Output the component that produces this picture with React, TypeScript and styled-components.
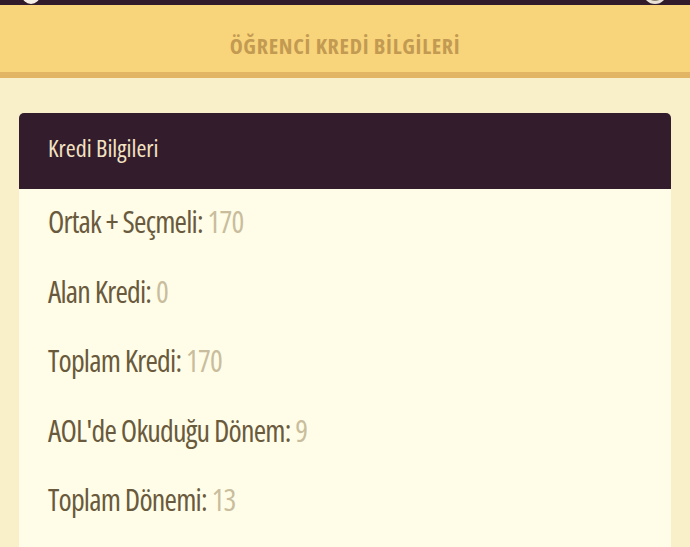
import React from "react";
import styled, { createGlobalStyle } from "styled-components";

const Global = createGlobalStyle`
  html, body { margin: 0; padding: 0; }
  body {
    background: #f9efc9;
    font-family: "Open Sans", "Noto Sans", sans-serif;
    font-stretch: condensed;
  }
`;

const Page = styled.div`
  min-height: 547px;
  overflow: hidden;
  background: #f9efc9;
`;

const TopBar = styled.div`
  position: relative;
  height: 5px;
  background: #321b2b;
  overflow: hidden;
`;

const TopIcon = styled.span<{ $left: number; $size: number; $ring?: boolean }>`
  position: absolute;
  left: ${(p) => p.$left}px;
  bottom: 1px;
  width: ${(p) => p.$size}px;
  height: ${(p) => p.$size}px;
  border-radius: 50%;
  box-sizing: border-box;
  background: ${(p) => (p.$ring ? "#8d7f72" : "#f4efe6")};
  border: ${(p) => (p.$ring ? "3px solid #e9e2d6" : "none")};
`;

const TitleBar = styled.header`
  background: #f8d47b;
  border-bottom: 6px solid #e2b564;
  height: 73px;
  display: flex;
  align-items: center;
  justify-content: center;
  padding-top: 13px;
  box-sizing: border-box;
`;

const Title = styled.h1`
  margin: 0;
  font-size: 22px;
  font-weight: 700;
  font-stretch: condensed;
  color: #c29a52;
  letter-spacing: 0.7px;
`;

const Content = styled.main`
  padding: 35px 19px 0 19px;
`;

const Card = styled.section`
  background: #fffde8;
  border-radius: 5px 5px 0 0;
  overflow: hidden;
`;

const CardHeader = styled.div`
  background: #331c2c;
  height: 76px;
  display: flex;
  align-items: center;
  padding: 0 29px 8px;
  box-sizing: border-box;
`;

const CardTitle = styled.h2`
  margin: 0;
  font-size: 24px;
  font-weight: 500;
  color: #f3e3c3;
`;

const CardBody = styled.div`
  padding: 13px 29px 40px;
  display: flex;
  flex-direction: column;
  gap: 29.5px;
`;

const Item = styled.div`
  font-size: 30px;
  line-height: 40px;
  letter-spacing: -0.8px;
  color: #6a5a3d;
  white-space: nowrap;
`;

const Value = styled.span`
  color: #c9bd9e;
`;

const rows: [string, string][] = [
  ["Ortak + Seçmeli:", "170"],
  ["Alan Kredi:", "0"],
  ["Toplam Kredi:", "170"],
  ["AOL'de Okuduğu Dönem:", "9"],
  ["Toplam Dönemi:", "13"],
];

export default function App() {
  return (
    <Page>
      <Global />
      <TopBar>
        <TopIcon $left={22} $size={18} />
        <TopIcon $left={643} $size={24} $ring />
      </TopBar>
      <TitleBar>
        <Title>ÖĞRENCİ KREDİ BİLGİLERİ</Title>
      </TitleBar>
      <Content>
        <Card>
          <CardHeader>
            <CardTitle>Kredi Bilgileri</CardTitle>
          </CardHeader>
          <CardBody>
            {rows.map(([label, value]) => (
              <Item key={label}>
                {label} <Value>{value}</Value>
              </Item>
            ))}
          </CardBody>
        </Card>
      </Content>
    </Page>
  );
}
